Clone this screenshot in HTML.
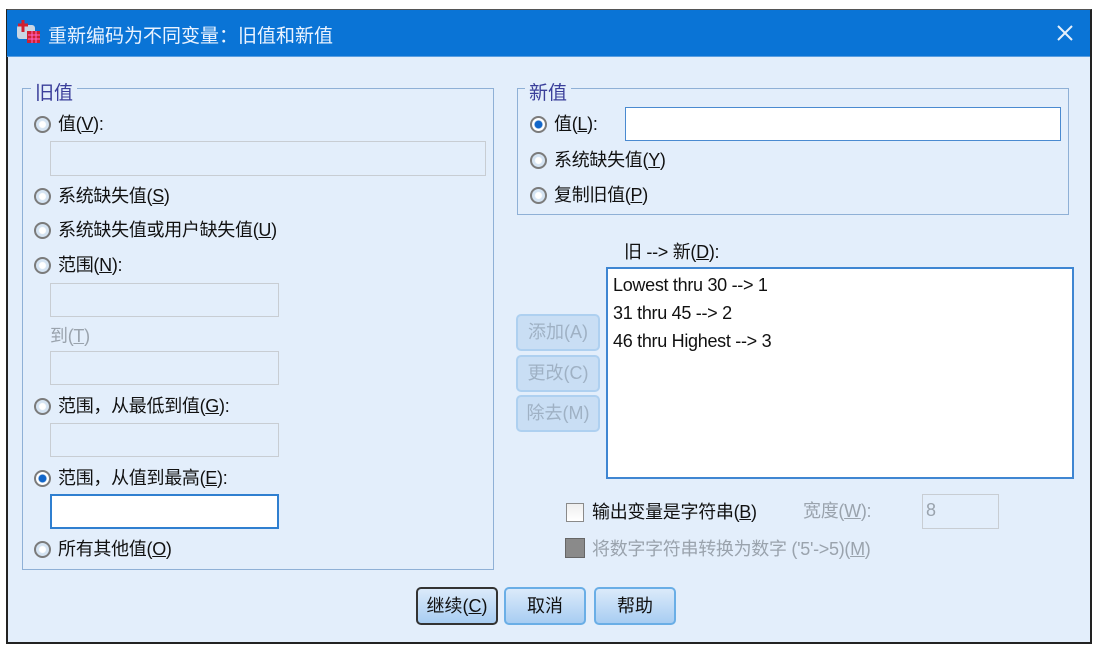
<!DOCTYPE html>
<html><head><meta charset="utf-8"><style>
*{box-sizing:border-box;margin:0;padding:0}
body{width:1100px;height:652px;background:#fff;position:relative;overflow:hidden;font-family:"Liberation Sans","Noto Sans CJK SC",sans-serif;font-size:18px;color:#111}
.a{position:absolute;white-space:nowrap}
.t{margin-top:-3px;letter-spacing:-0.3px}
.win{left:6px;top:9px;width:1086px;height:635px;background:#e3eefb;border:2px solid #222;border-top:1px solid #555}
.title{left:7px;top:10px;width:1083px;height:47px;background:#0a74d6;border-bottom:1px solid #5a9ee0}
.tt{color:#eaf3ff;font-size:19px;left:48px;top:21px}
.grp{border:1.5px solid #8fb0d6}
.leg{background:#e3eefb;color:#3a3e9a;padding:0 4px;font-size:19px}
.r{width:17px;height:17px;border-radius:50%;border:2px solid #7b7b7b;background:radial-gradient(circle,#fff 0 3px,#d5e4f3 4px)}
.rs{background:radial-gradient(circle,#1266c9 0 3.5px,#fff 4.5px)}
.inp{background:#e3eefb;border:1.5px solid #c8cdd3}
.inw{background:#fff;border:2px solid #2f7fd0}
.btn{border:2px solid #6aaee6;border-radius:5px;background:linear-gradient(#dbeafa,#a8cdf2);text-align:center;font-size:18px;line-height:34px}
.dis{border:2px solid #aed0f0;background:#c9def4;color:#9fb1c4;border-radius:5px;text-align:center;line-height:32px}
u{text-decoration:underline}
.g{color:#9aa3ad}
</style></head><body>
<div class="a win"></div>
<div class="a title"></div>
<svg class="a" style="left:15px;top:19px" width="26" height="26"><rect x="2" y="6" width="18" height="14" rx="3" fill="#c9d6e4"/><rect x="12" y="12" width="13" height="12" fill="#d02030"/><path d="M13 16h12M13 20h12M17 12v12M21 12v12" stroke="#f6c" stroke-width="1"/><path d="M8 1v12M3 6h10" stroke="#d02030" stroke-width="3"/></svg>
<div class="a tt">重新编码为不同变量：旧值和新值</div>
<svg class="a" style="left:1056px;top:24px" width="18" height="18"><path d="M2 2L16 16M16 2L2 16" stroke="#e6f0fb" stroke-width="2"/></svg>

<div class="a grp" style="left:22px;top:88px;width:472px;height:482px"></div>
<div class="a leg" style="left:31px;top:78px">旧值</div>
<div class="a r" style="left:34px;top:116px"></div><div class="a t" style="left:58px;top:113px">值(<u>V</u>):</div>
<div class="a inp" style="left:50px;top:141px;width:436px;height:35px"></div>
<div class="a r" style="left:34px;top:188px"></div><div class="a t" style="left:58px;top:185px">系统缺失值(<u>S</u>)</div>
<div class="a r" style="left:34px;top:222px"></div><div class="a t" style="left:58px;top:219px">系统缺失值或用户缺失值(<u>U</u>)</div>
<div class="a r" style="left:34px;top:257px"></div><div class="a t" style="left:58px;top:254px">范围(<u>N</u>):</div>
<div class="a inp" style="left:50px;top:283px;width:229px;height:34px"></div>
<div class="a g t" style="left:50px;top:325px">到(<u>T</u>)</div>
<div class="a inp" style="left:50px;top:351px;width:229px;height:34px"></div>
<div class="a r" style="left:34px;top:398px"></div><div class="a t" style="left:58px;top:395px">范围，从最低到值(<u>G</u>):</div>
<div class="a inp" style="left:50px;top:423px;width:229px;height:34px"></div>
<div class="a r rs" style="left:34px;top:470px"></div><div class="a t" style="left:58px;top:467px">范围，从值到最高(<u>E</u>):</div>
<div class="a inw" style="left:50px;top:494px;width:229px;height:35px"></div>
<div class="a r" style="left:34px;top:541px"></div><div class="a t" style="left:58px;top:538px">所有其他值(<u>O</u>)</div>

<div class="a grp" style="left:517px;top:88px;width:552px;height:127px"></div>
<div class="a leg" style="left:525px;top:78px">新值</div>
<div class="a r rs" style="left:530px;top:116px"></div><div class="a t" style="left:554px;top:113px">值(<u>L</u>):</div>
<div class="a" style="left:625px;top:107px;width:436px;height:34px;background:#fff;border:1.5px solid #4a8ad0"></div>
<div class="a r" style="left:530px;top:152px"></div><div class="a t" style="left:554px;top:149px">系统缺失值(<u>Y</u>)</div>
<div class="a r" style="left:530px;top:187px"></div><div class="a t" style="left:554px;top:184px">复制旧值(<u>P</u>)</div>

<div class="a t" style="left:624px;top:241px">旧 --&gt; 新(<u>D</u>):</div>
<div class="a" style="left:606px;top:267px;width:468px;height:212px;background:#fff;border:2px solid #3f86d2;padding:2px 5px;line-height:28px;letter-spacing:-0.3px">Lowest thru 30 --&gt; 1<br>31 thru 45 --&gt; 2<br>46 thru Highest --&gt; 3</div>
<div class="a dis" style="left:516px;top:314px;width:84px;height:37px">添加(A)</div>
<div class="a dis" style="left:516px;top:355px;width:84px;height:37px">更改(C)</div>
<div class="a dis" style="left:516px;top:395px;width:84px;height:37px">除去(M)</div>

<div class="a" style="left:566px;top:503px;width:18px;height:19px;border:1.5px solid #8a8a8a;background:linear-gradient(#eee,#fff)"></div>
<div class="a t" style="left:592px;top:501px">输出变量是字符串(<u>B</u>)</div>
<div class="a g t" style="left:803px;top:500px">宽度(<u>W</u>):</div>
<div class="a inp" style="left:922px;top:494px;width:77px;height:35px;color:#9aa3ad;padding:5px 3px">8</div>
<div class="a" style="left:565px;top:538px;width:20px;height:20px;border:1.5px solid #666;background:#8a8a8a"></div>
<div class="a g t" style="left:592px;top:538px">将数字字符串转换为数字 ('5'-&gt;5)(<u>M</u>)</div>

<div class="a btn" style="left:416px;top:587px;width:82px;height:38px;border:2px solid #333">继续(<u>C</u>)</div>
<div class="a btn" style="left:504px;top:587px;width:82px;height:38px">取消</div>
<div class="a btn" style="left:594px;top:587px;width:82px;height:38px">帮助</div>
</body></html>
